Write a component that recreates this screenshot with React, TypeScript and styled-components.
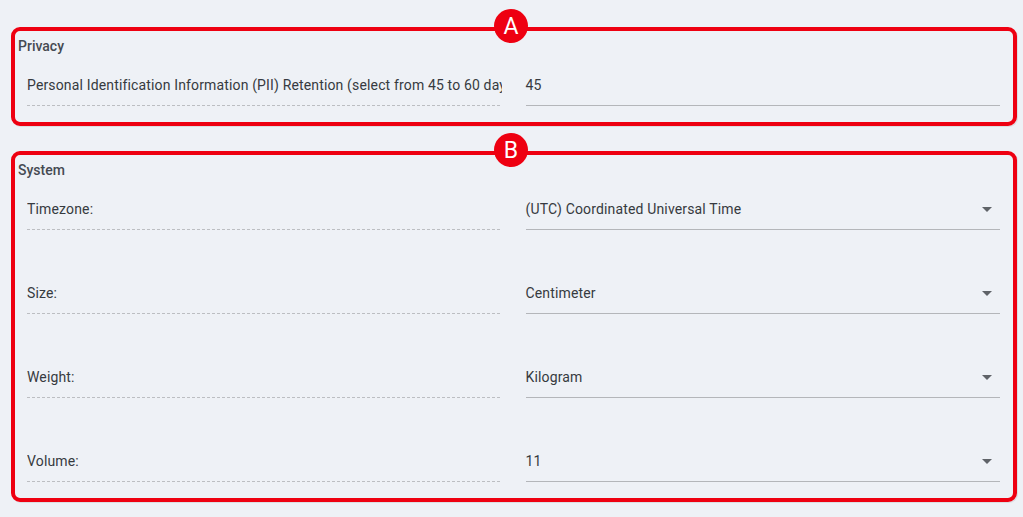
import React from "react";
import styled, { createGlobalStyle } from "styled-components";

const GlobalStyle = createGlobalStyle`
  html, body {
    margin: 0;
    padding: 0;
    background: #eef1f6;
    font-family: Roboto, "Noto Sans", "Liberation Sans", sans-serif;
  }
  * { box-sizing: border-box; }
`;

const Page = styled.div`
  display: flex;
  flex-direction: column;
  gap: 25px;
  padding: 27px 6px 15px 11px;
  min-height: 517px;
  background: #eef1f6;
`;

const Card = styled.section`
  position: relative;
  border: 4px solid #ee0011;
  border-radius: 9px;
  padding: 7px 13px 16px 3px;
  box-shadow: 1px 1px 0 rgba(0, 0, 0, 0.08);
`;

const Badge = styled.div`
  position: absolute;
  top: -22px;
  left: 479px;
  width: 34px;
  height: 34px;
  border-radius: 50%;
  background: #ee0011;
  color: #fff;
  display: flex;
  align-items: center;
  justify-content: center;
  font-family: Roboto, "Liberation Sans", sans-serif;
  font-size: 23px;
  font-weight: 400;
  line-height: 1;
  padding-top: 1px;
`;

const Title = styled.h2`
  margin: 0 0 15px 0;
  font-size: 14px;
  line-height: 16px;
  font-weight: 500;
  color: #454a52;
`;

const Rows = styled.div`
  display: flex;
  flex-direction: column;
  gap: 47px;
  padding-left: 9px;
`;

const Row = styled.div`
  display: grid;
  grid-template-columns: 1fr 1fr;
  column-gap: 24px;
`;

const Label = styled.div`
  padding: 8px 0 13px;
  font-size: 14px;
  line-height: 16px;
  letter-spacing: 0.15px;
  color: #363a40;
  white-space: nowrap;
  overflow: hidden;
  background: linear-gradient(to right, #bcbec2 60%, transparent 0) left bottom / 5px 1px repeat-x;
`;

const Value = styled.div`
  position: relative;
  display: flex;
  align-items: center;
  justify-content: space-between;
  padding: 8px 8px 12px 0;
  font-size: 14px;
  line-height: 16px;
  letter-spacing: 0.15px;
  color: #363a40;
  border-bottom: 1px solid #b4b6ba;
`;

const Arrow = styled.span`
  width: 0;
  height: 0;
  border-left: 5px solid transparent;
  border-right: 5px solid transparent;
  border-top: 5px solid #5f6368;
`;

type Field = { label: string; value: string; select?: boolean };

const privacy: Field[] = [
  {
    label:
      "Personal Identification Information (PII) Retention (select from 45 to 60 days)",
    value: "45",
  },
];

const system: Field[] = [
  { label: "Timezone:", value: "(UTC) Coordinated Universal Time", select: true },
  { label: "Size:", value: "Centimeter", select: true },
  { label: "Weight:", value: "Kilogram", select: true },
  { label: "Volume:", value: "11", select: true },
];

const Section: React.FC<{ badge: string; title: string; fields: Field[] }> = ({
  badge,
  title,
  fields,
}) => (
  <Card>
    <Badge>{badge}</Badge>
    <Title>{title}</Title>
    <Rows>
      {fields.map((f) => (
        <Row key={f.label}>
          <Label>{f.label}</Label>
          <Value>
            <span>{f.value}</span>
            {f.select && <Arrow />}
          </Value>
        </Row>
      ))}
    </Rows>
  </Card>
);

export default function App() {
  return (
    <>
      <GlobalStyle />
      <Page>
        <Section badge="A" title="Privacy" fields={privacy} />
        <Section badge="B" title="System" fields={system} />
      </Page>
    </>
  );
}
